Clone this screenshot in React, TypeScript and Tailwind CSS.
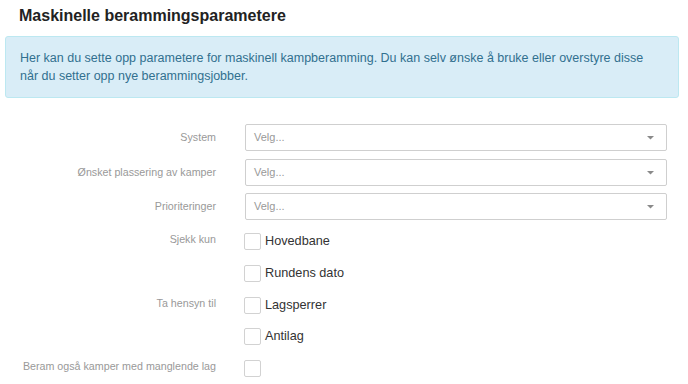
import React from "react";

const Caret = () => (
  <svg width="7" height="4" viewBox="0 0 7 4" className="shrink-0">
    <polygon points="0,0 7,0 3.5,3.5" fill="#8a8a8a" />
  </svg>
);

const SelectRow = ({ label, mb }: { label: string; mb: string }) => (
  <div className={`flex items-center ${mb}`}>
    <div className="w-[211px] text-right text-[10.7px] text-[#999]">{label}</div>
    <div className="ml-[29px] flex h-[27px] w-[422px] items-center justify-between rounded-[2px] border border-[#cfcfcf] bg-white pl-[8px] pr-[12px]">
      <span className="text-[11px] text-[#999]">Velg...</span>
      <Caret />
    </div>
  </div>
);

const Box = () => (
  <div className="h-[17px] w-[17px] shrink-0 rounded-[2px] border border-[#d2d2d2] bg-white" />
);

const CheckRow = ({ label, text, mt }: { label?: string; text?: string; mt: string }) => (
  <div className={`flex items-start ${mt}`}>
    <div className="-mt-[2px] w-[211px] text-right text-[10.7px] leading-[17px] text-[#999]">{label ?? ""}</div>
    <div className="ml-[28px] flex items-center">
      <Box />
      {text && <span className="ml-[4px] text-[12.7px] leading-[17px] text-[#333]">{text}</span>}
    </div>
  </div>
);

export default function App() {
  return (
    <div
      className="h-[384px] w-[688px] overflow-hidden bg-white pl-[5px] pr-[9px] pt-[6px]"
      style={{ fontFamily: '"Liberation Sans", Arial, sans-serif' }}
    >
      <h1 className="ml-[14px] text-[16px] font-bold leading-[20px] text-[#222]">
        Maskinelle berammingsparametere
      </h1>
      <div className="mt-[10px] h-[62px] rounded-[3px] border border-[#bce8f1] bg-[#d9edf7] pl-[14px] pt-[13px] text-[12.5px] leading-[17.5px] text-[#31708f]">
        Her kan du sette opp parametere for maskinell kampberamming. Du kan selv ønske å bruke eller overstyre disse
        <br />
        når du setter opp nye berammingsjobber.
      </div>
      <div className="mt-[26px]">
        <SelectRow label="System" mb="mb-[8px]" />
        <SelectRow label="Ønsket plassering av kamper" mb="mb-[7px]" />
        <SelectRow label="Prioriteringer" mb="mb-0" />
        <CheckRow label="Sjekk kun" text="Hovedbane" mt="mt-[13px]" />
        <CheckRow text="Rundens dato" mt="mt-[15px]" />
        <CheckRow label="Ta hensyn til" text="Lagsperrer" mt="mt-[14.5px]" />
        <CheckRow text="Antilag" mt="mt-[14.5px]" />
        <CheckRow label="Beram også kamper med manglende lag" mt="mt-[14.5px]" />
      </div>
    </div>
  );
}
